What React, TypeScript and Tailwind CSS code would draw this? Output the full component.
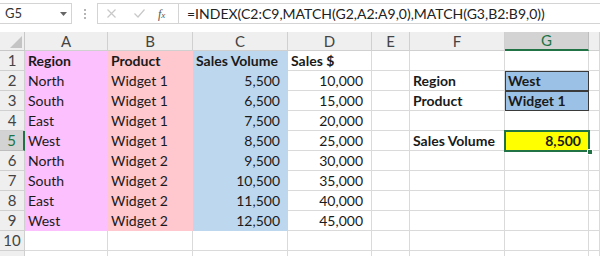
import React from 'react';

const FONT = "font-['Lato','Carlito','Liberation_Sans',sans-serif]";

const cols = ['A', 'B', 'C', 'D', 'E', 'F', 'G', 'H'];

type Cell = { v?: string; bold?: boolean; right?: boolean; bg?: string; extra?: string };

const regions = ['North', 'South', 'East', 'West', 'North', 'South', 'East', 'West'];
const volumes = ['5,500', '6,500', '7,500', '8,500', '9,500', '10,500', '11,500', '12,500'];
const sales = ['10,000', '15,000', '20,000', '25,000', '30,000', '35,000', '40,000', '45,000'];

const buildRows = (): Cell[][] => {
  const rows: Cell[][] = [];
  for (let r = 1; r <= 11; r++) {
    const row: Cell[] = cols.map(() => ({}));
    if (r === 1) {
      row[0] = { v: 'Region', bold: true, bg: 'bg-[#fbc0fd]' };
      row[1] = { v: 'Product', bold: true, bg: 'bg-[#ffc7ce]' };
      row[2] = { v: 'Sales Volume', bold: true, bg: 'bg-[#bdd7ee]' };
      row[3] = { v: 'Sales $', bold: true };
    } else if (r <= 9) {
      const i = r - 2;
      row[0] = { v: regions[i], bg: 'bg-[#fbc0fd]' };
      row[1] = { v: i < 4 ? 'Widget 1' : 'Widget 2', bg: 'bg-[#ffc7ce]' };
      row[2] = { v: volumes[i], right: true, bg: 'bg-[#bdd7ee]' };
      row[3] = { v: sales[i], right: true };
    }
    if (r === 2) {
      row[5] = { v: 'Region', bold: true };
      row[6] = { v: 'West', bold: true, bg: 'bg-[#9bc2e6]', extra: 'outline outline-1 outline-[#3a3a3a] -outline-offset-1 z-10' };
    }
    if (r === 3) {
      row[5] = { v: 'Product', bold: true };
      row[6] = { v: 'Widget 1', bold: true, bg: 'bg-[#9bc2e6]', extra: 'outline outline-1 outline-[#3a3a3a] -outline-offset-1 z-10' };
    }
    if (r === 5) {
      row[5] = { v: 'Sales Volume', bold: true };
      row[6] = { v: '8,500', bold: true, right: true, bg: 'bg-[#ffff00]', extra: 'outline outline-2 outline-[#217346] -outline-offset-1 z-20' };
    }
    rows.push(row);
  }
  return rows;
};

const FormulaBar = () => (
  <div className="h-[32px] bg-white relative">
    <div className="flex items-start pt-[3px] h-[28px]">
      {/* name box */}
      <div className="w-[72px] h-[21px] border border-[#d4d4d4] border-l-0 bg-white flex items-center justify-between pl-[5px] pr-[4px]">
        <span className="text-[13px] text-[#333] leading-none">G5</span>
        <svg width="7" height="4" viewBox="0 0 7 4"><path d="M0 0h7L3.5 4z" fill="#666" /></svg>
      </div>
      <div className="w-[25px] h-[21px] flex flex-col items-center justify-center gap-[2px]">
        <div className="w-[2px] h-[2px] bg-[#b5b5b5]" />
        <div className="w-[2px] h-[2px] bg-[#b5b5b5]" />
        <div className="w-[2px] h-[2px] bg-[#b5b5b5]" />
      </div>
      {/* x / check / fx */}
      <div className="w-[82px] h-[21px] border border-[#d4d4d4] bg-white flex items-center pl-[9px]">
        <svg width="9" height="9" viewBox="0 0 9 9" className="mr-[18px]">
          <path d="M0.5 0.5L8.5 8.5M8.5 0.5L0.5 8.5" stroke="#c8c8c8" strokeWidth="1.2" />
        </svg>
        <svg width="11" height="9" viewBox="0 0 11 9" className="mr-[13px]">
          <path d="M0.5 4.5L4 8L10.5 0.5" stroke="#c8c8c8" strokeWidth="1.2" fill="none" />
        </svg>
        <span className="font-['Liberation_Serif',serif] italic text-[12px] text-[#555] leading-none">
          f<span className="text-[9px]">x</span>
        </span>
      </div>
      <div className="flex-1 h-[21px] border border-[#d4d4d4] border-r-0 bg-white flex items-center pl-[8px] ml-[-1px]">
        <span className="text-[14px] text-[#222] leading-none whitespace-nowrap">
          =INDEX(C2:C9,MATCH(G2,A2:A9,0),MATCH(G3,B2:B9,0))
        </span>
      </div>
    </div>
  </div>
);

export default function App() {
  const rows = buildRows();
  return (
    <div className={`w-[600px] h-[256px] overflow-hidden bg-white ${FONT}`}>
      <FormulaBar />
      <div className="grid grid-cols-[25px_83px_85px_95px_84px_38px_95px_84px_11px] auto-rows-[20px] [grid-template-rows:19px]">
        {/* header row */}
        <div className="h-[19px] bg-[#efefef] border-r border-b border-[#c8c8c8] relative">
          <svg width="12" height="12" viewBox="0 0 12 12" className="absolute right-[2px] bottom-[2px]">
            <path d="M12 0V12H0z" fill="#c4c4c4" />
          </svg>
        </div>
        {cols.map((c) => (
          <div
            key={c}
            className={
              c === 'G'
                ? 'h-[19px] bg-[#d3d3d3] border-r border-[#bdbdbd] border-b-2 border-b-[#217346] flex items-center justify-center text-[15px] text-[#217346] leading-none'
                : 'h-[19px] bg-[#efefef] border-r border-b border-[#d0d0d0] flex items-center justify-center text-[15px] text-[#444] leading-none'
            }
          >
            {c === 'H' ? '' : c}
          </div>
        ))}
        {rows.map((row, ri) => {
          const r = ri + 1;
          return (
            <React.Fragment key={r}>
              <div
                className={
                  r === 5
                    ? 'h-[20px] bg-[#d3d3d3] border-b border-[#bdbdbd] border-r-2 border-r-[#217346] flex items-center justify-center text-[15px] text-[#217346] leading-none'
                    : 'h-[20px] bg-[#efefef] border-b border-r border-[#d0d0d0] flex items-center justify-center text-[15px] text-[#444] leading-none'
                }
              >
                {r <= 10 ? r : ''}
              </div>
              {row.map((cell, ci) => (
                <div
                  key={ci}
                  className={`relative h-[20px] flex items-center whitespace-nowrap text-[14px] leading-none text-[#1a1a1a] ${
                    cell.bg ? cell.bg : 'border-r border-b border-[#dadada]'
                  } ${cell.right ? 'justify-end pr-[8px]' : 'pl-[3px]'} ${cell.bold ? 'font-bold' : ''} ${cell.extra ?? ''}`}
                >
                  {cell.v}
                  {r === 5 && ci === 6 && (
                    <div className="absolute right-[-4px] bottom-[-4px] w-[6px] h-[6px] bg-[#217346] border border-white" />
                  )}
                </div>
              ))}
            </React.Fragment>
          );
        })}
      </div>
    </div>
  );
}
